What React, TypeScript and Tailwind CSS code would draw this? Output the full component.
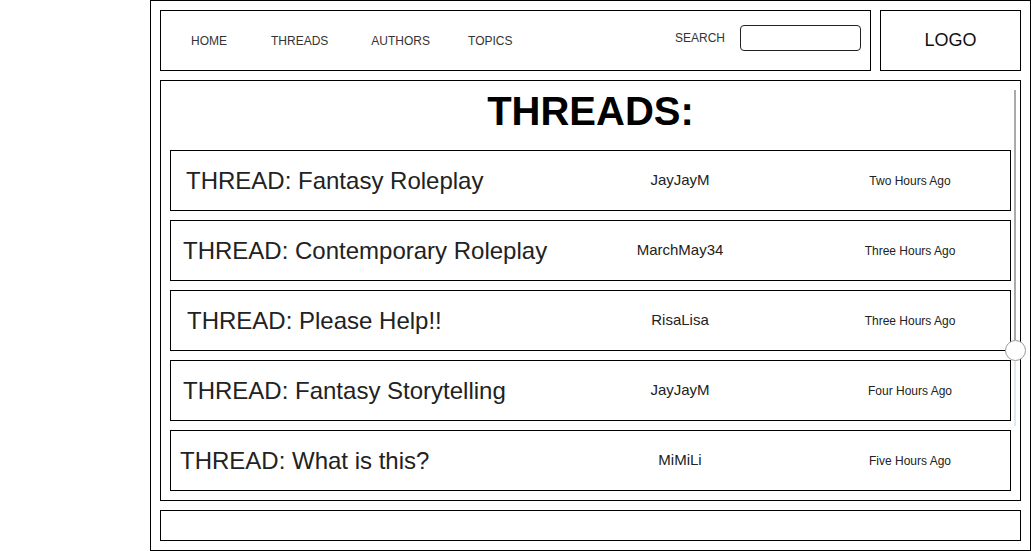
import React from 'react';

const navLinks = [
  { label: 'HOME', ml: 'ml-[30px]' },
  { label: 'THREADS', ml: 'ml-[44px]' },
  { label: 'AUTHORS', ml: 'ml-[43px]' },
  { label: 'TOPICS', ml: 'ml-[38px]' },
];

const threads = [
  { title: 'THREAD: Fantasy Roleplay', author: 'JayJayM', time: 'Two Hours Ago', pad: 'pl-[15px]' },
  { title: 'THREAD: Contemporary Roleplay', author: 'MarchMay34', time: 'Three Hours Ago', pad: 'pl-[12px]' },
  { title: 'THREAD: Please Help!!', author: 'RisaLisa', time: 'Three Hours Ago', pad: 'pl-[16px]' },
  { title: 'THREAD: Fantasy Storytelling', author: 'JayJayM', time: 'Four Hours Ago', pad: 'pl-[12px]' },
  { title: 'THREAD: What is this?', author: 'MiMiLi', time: 'Five Hours Ago', pad: 'pl-[9px]' },
];

const ThreadRow: React.FC<{ title: string; author: string; time: string; pad: string }> = ({ title, author, time, pad }) => (
  <div className="h-[61px] border border-black flex items-center">
    <div className={`w-[429px] flex-none text-[24px] text-[#222] whitespace-nowrap ${pad}`}>{title}</div>
    <div className="w-[160px] flex-none text-center text-[15px] text-[#222]">{author}</div>
    <div className="w-[180px] flex-none ml-auto mr-[10px] text-center text-[12px] text-[#222]">{time}</div>
  </div>
);

const App: React.FC = () => {
  return (
    <div className="w-[1031px] h-[551px] bg-white font-['Liberation_Sans',Arial,sans-serif] overflow-hidden">
      <div className="ml-[150px] w-[881px] h-[551px] border border-black p-[9px] flex flex-col gap-[9px]">
        {/* header */}
        <div className="flex gap-[9px] h-[61px] flex-none">
          <div className="w-[711px] border border-black flex items-center">
            {navLinks.map(link => (
              <span key={link.label} className={`${link.ml} text-[12px] text-[#333]`}>
                {link.label}
              </span>
            ))}
            <div className="ml-auto mr-[9px] mb-[5px] flex items-center gap-[15px]">
              <span className="text-[12px] text-[#333]">SEARCH</span>
              <div className="w-[121px] h-[26px] rounded-[4px] border border-[#222] bg-white" />
            </div>
          </div>
          <div className="flex-1 border border-black flex items-center justify-center">
            <span className="text-[18px] text-[#111]">LOGO</span>
          </div>
        </div>

        {/* threads list */}
        <div className="relative h-[421px] flex-none border border-black px-[9px] pt-[10px] flex flex-col">
          <h1 className="h-[40px] leading-[40px] text-[40px] font-bold text-black text-center">THREADS:</h1>
          <div className="mt-[19px] flex flex-col gap-[9px]">
            {threads.map((t, i) => (
              <ThreadRow key={i} {...t} />
            ))}
          </div>

          {/* slider */}
          <div className="absolute left-[853px] top-[9px] w-[2px] h-[250px] bg-[#aaa]" />
          <div className="absolute left-[853px] top-[280px] w-[2px] h-[65px] bg-[#dde8f2]" />
          <div className="absolute left-[844px] top-[259px] w-[21px] h-[21px] rounded-full border border-[#999] bg-white" />
        </div>

        {/* footer */}
        <div className="h-[31px] flex-none border border-black" />
      </div>
    </div>
  );
};

export default App;
